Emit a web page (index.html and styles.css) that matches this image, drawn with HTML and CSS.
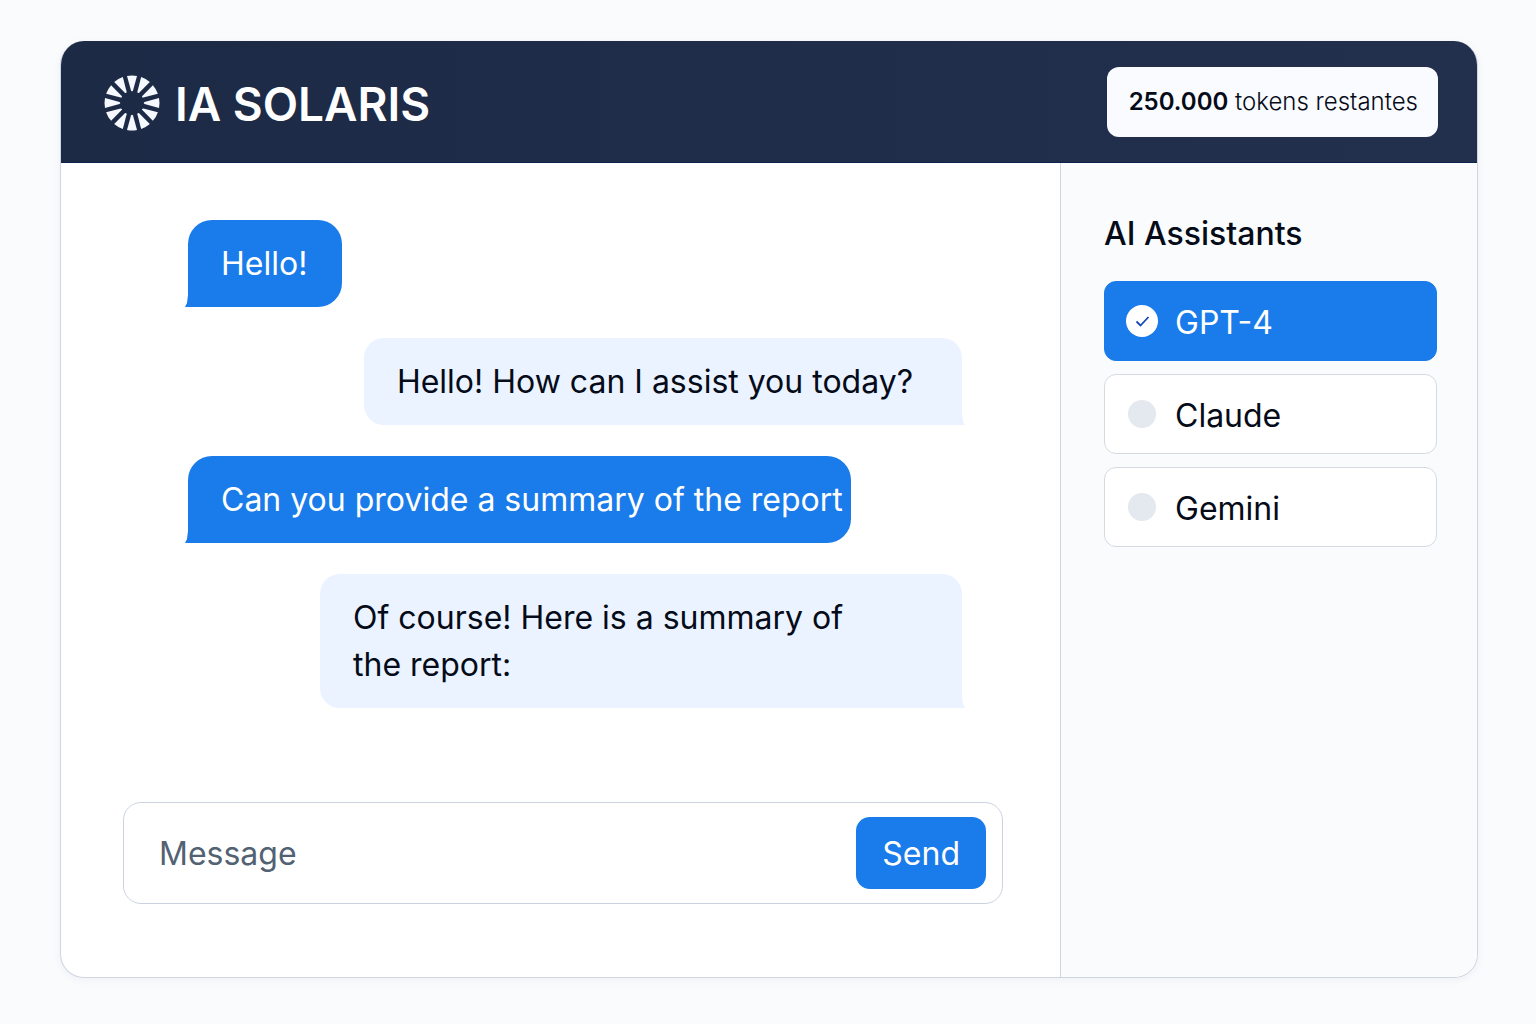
FILE: index.html
```html
<!DOCTYPE html>
<html lang="en">
<head>
<meta charset="utf-8">
<meta name="viewport" content="width=device-width, initial-scale=1">
<title>IA Solaris</title>
<link rel="stylesheet" href="styles.css">
</head>
<body>
<div class="app">
  <header class="header">
    <div class="brand">
      <svg class="brand-icon" viewBox="-28 -28 56 56" aria-hidden="true">
        <defs><path id="ray" d="M-5 -27Q0 -28 5 -27L1 -12.5Q0 -10.8 -1 -12.5Z"/></defs>
        <g fill="#f5f8fe">
          <use href="#ray"/>
          <use href="#ray" transform="rotate(30)"/>
          <use href="#ray" transform="rotate(60)"/>
          <use href="#ray" transform="rotate(90)"/>
          <use href="#ray" transform="rotate(120)"/>
          <use href="#ray" transform="rotate(150)"/>
          <use href="#ray" transform="rotate(180)"/>
          <use href="#ray" transform="rotate(210)"/>
          <use href="#ray" transform="rotate(240)"/>
          <use href="#ray" transform="rotate(270)"/>
          <use href="#ray" transform="rotate(300)"/>
          <use href="#ray" transform="rotate(330)"/>
        </g>
      </svg>
      <h1 class="brand-name">IA SOLARIS</h1>
    </div>
    <p class="tokens"><strong>250.000</strong> tokens restantes</p>
  </header>
  <div class="content">
    <main class="chat">
      <div class="messages">
        <p class="bubble bubble-user">Hello!</p>
        <p class="bubble bubble-bot bubble-short">Hello! How can I assist you today?</p>
        <p class="bubble bubble-user bubble-tight">Can you provide a summary of the report</p>
        <p class="bubble bubble-bot bubble-long">Of course! Here is a summary of the report:</p>
      </div>
      <form class="composer">
        <input class="composer-input" type="text" placeholder="Message" aria-label="Message">
        <button class="send" type="button">Send</button>
      </form>
    </main>
    <aside class="sidebar">
      <h2 class="sidebar-title" id="assistants">AI Assistants</h2>
      <div class="options" role="radiogroup" aria-labelledby="assistants">
        <label class="option option-active">
          <span class="mark">
            <input class="radio" type="radio" name="assistant" checked>
            <svg class="check" viewBox="0 0 32 32" aria-hidden="true"><path d="M10.5 16.5l4 4 8-8.5" fill="none" stroke="#1746b8" stroke-width="1.8"/></svg>
          </span>
          <span class="option-name">GPT-4</span>
        </label>
        <label class="option">
          <span class="mark"><input class="radio" type="radio" name="assistant"></span>
          <span class="option-name">Claude</span>
        </label>
        <label class="option">
          <span class="mark"><input class="radio" type="radio" name="assistant"></span>
          <span class="option-name">Gemini</span>
        </label>
      </div>
    </aside>
  </div>
</div>
</body>
</html>
```
FILE: styles.css
```css
* { box-sizing: border-box; }

body {
  margin: 0;
  min-height: 100vh;
  display: flex;
  padding: 41px 58px 46px 60px;
  background: #fafbfd;
  color: #050b18;
  font-family: Inter, "Liberation Sans", sans-serif;
  font-size: 32px;
  line-height: 46px;
}

h1, h2, p { margin: 0; }

.app {
  flex: 1;
  min-width: 0;
  display: flex;
  flex-direction: column;
  border: 1px solid #cfd6df;
  border-top: 0;
  border-radius: 24px;
  overflow: hidden;
  background: #fff;
  box-shadow: 0 2px 8px rgba(20, 35, 70, 0.05);
}

.header {
  display: flex;
  align-items: center;
  justify-content: space-between;
  min-height: 122px;
  padding: 0 39px 0 43px;
  background: linear-gradient(90deg, #1c2a46, #22304e);
  border-bottom: 1px solid #0b2150;
}

.brand { display: flex; align-items: center; gap: 15px; padding-top: 2px; }
.brand-icon { width: 56px; height: 56px; }
.brand-name { padding-top: 2px; color: #fff; font-size: 46px; font-weight: 600; line-height: 56px; }

.tokens {
  padding: 12px 20px 12px 22px;
  border-radius: 12px;
  background: #fafbfe;
  font-size: 24px;
  font-weight: 300;
}
.tokens strong { font-weight: 600; }

.content { flex: 1; display: flex; }

.chat {
  flex: 1;
  min-width: 0;
  display: flex;
  flex-direction: column;
  justify-content: space-between;
  padding: 57px 57px 73px 62px;
}

.messages {
  display: flex;
  flex-direction: column;
  align-items: flex-start;
  gap: 31px;
  padding: 0 41px 0 65px;
}

.bubble {
  position: relative;
  padding: 20px 35px 20px 33px;
  border-radius: 24px;
  line-height: 47px;
}
.bubble::after {
  content: "";
  position: absolute;
  bottom: 0;
  width: 3px;
  height: 12px;
  background: inherit;
}
.bubble-user { background: #1a7bea; color: #fff; border-bottom-left-radius: 0; }
.bubble-user::after { right: 100%; clip-path: polygon(100% 0, 100% 100%, 0 100%, 67% 67%); }
.bubble-bot { align-self: flex-end; background: #eaf3ff; border-radius: 20px 20px 0 20px; }
.bubble-bot::after { left: 100%; clip-path: polygon(0 0, 0 100%, 100% 100%, 33% 67%); }
.bubble-tight { padding-right: 8px; }
.bubble-short { padding-right: 49px; }
.bubble-long { max-width: 642px; padding-right: 80px; }

.composer {
  display: flex;
  align-items: center;
  gap: 16px;
  padding: 14px 16px 14px 35px;
  border: 1px solid #cbd3de;
  border-radius: 18px;
  background: #fff;
}
.composer-input {
  flex: 1;
  min-width: 0;
  padding: 2px 0 0;
  border: 0;
  outline: 0;
  background: none;
  color: inherit;
  font: inherit;
}
.composer-input::placeholder { color: #536273; opacity: 1; }

.send {
  padding: 14px 26px 12px;
  border: 0;
  border-radius: 14px;
  background: #1a7bea;
  color: #fff;
  font: inherit;
}

.sidebar {
  width: 417px;
  padding: 48px 40px 40px 43px;
  border-left: 1px solid #cfd6df;
  background: #fafbfd;
}
.sidebar-title { font-size: 32px; font-weight: 500; line-height: 46px; }

.options { display: flex; flex-direction: column; gap: 13px; padding-top: 24px; }

.option {
  display: flex;
  align-items: center;
  gap: 17px;
  padding: 14px 21px;
  border: 1px solid #d5dae2;
  border-radius: 12px;
  background: #fff;
}
.option-active { border-color: #1a7bea; background: #1a7bea; color: #fff; }
.option-name { padding-top: 4px; }

.mark { display: grid; place-items: center; width: 32px; height: 32px; }
.mark > * { grid-area: 1 / 1; }
.radio {
  appearance: none;
  width: 28px;
  height: 28px;
  margin: 0;
  border-radius: 50%;
  background: #e4e8ef;
}
.radio:checked { width: 32px; height: 32px; background: #fff; }
.check { position: relative; width: 32px; height: 32px; pointer-events: none; }
```
